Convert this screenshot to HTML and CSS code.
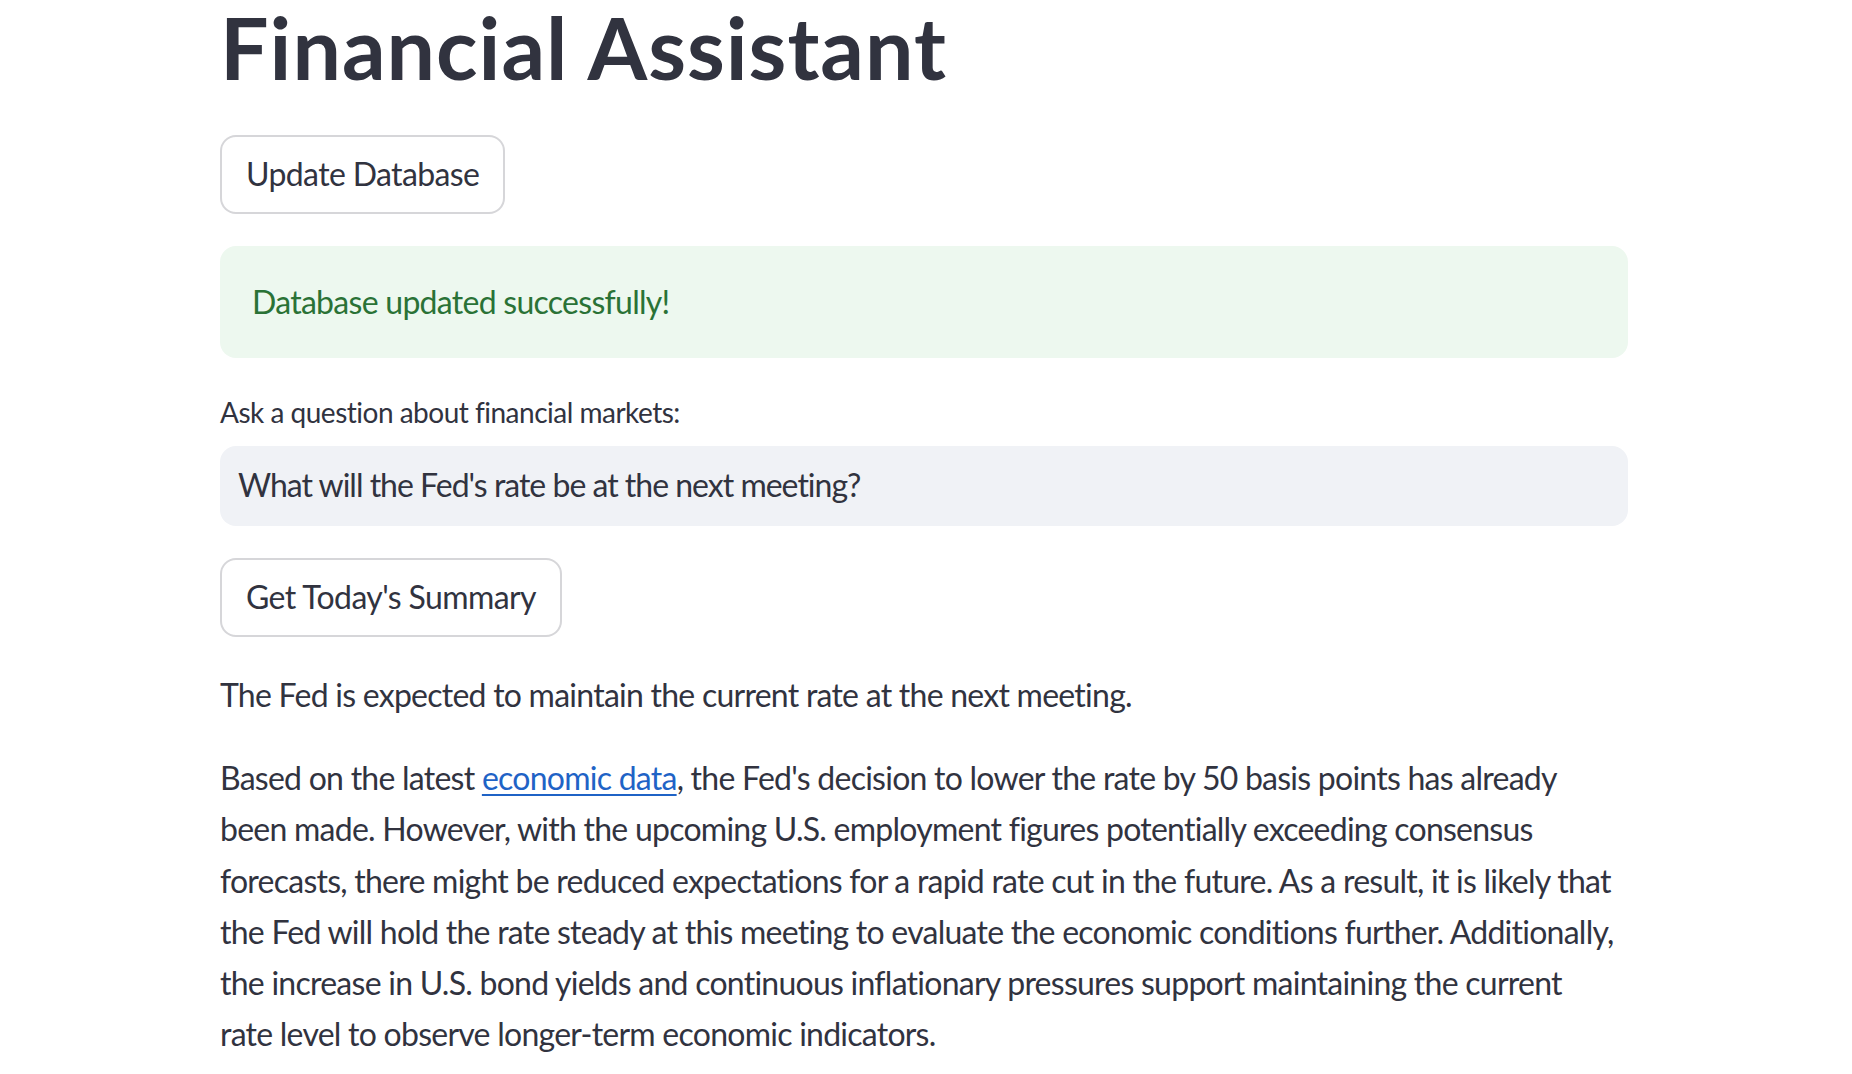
FILE: index.html
```html
<!DOCTYPE html>
<html lang="en">
<head>
<meta charset="utf-8">
<title>Financial Assistant</title>
<link rel="stylesheet" href="styles.css">
</head>
<body>
<main class="app">
  <div class="block">
    <h1 class="title">Financial Assistant</h1>
    <div class="btn-row"><button class="btn">Update Database</button></div>
    <div class="alert-success"><p>Database updated successfully!</p></div>
    <div class="field">
      <label class="field-label" for="q">Ask a question about financial markets:</label>
      <input class="field-input" id="q" type="text" value="What will the Fed's rate be at the next meeting?">
    </div>
    <div class="btn-row"><button class="btn">Get Today's Summary</button></div>
    <div class="markdown">
      <p>The Fed is expected to maintain the current rate at the next meeting.</p>
      <p>Based on the latest <a href="#">economic data</a>, the Fed's decision to lower the rate by 50 basis points has already been made. However, with the upcoming U.S. employment figures potentially exceeding consensus forecasts, there might be reduced expectations for a rapid rate cut in the future. As a result, it is likely that the Fed will hold the rate steady at this meeting to evaluate the economic conditions further. Additionally, the increase in U.S. bond yields and continuous inflationary pressures support maintaining the current rate level to observe longer-term economic indicators.</p>
    </div>
  </div>
</main>
</body>
</html>
```

FILE: styles.css
```css
html, body {
  margin: 0;
  padding: 0;
  background: #ffffff;
}

body {
  font-family: "Lato", "Noto Sans", sans-serif;
  color: #31333f;
  overflow: hidden;
}

.app {
  width: 1408px;
  margin-left: 220px;
}

.block {
  display: flex;
  flex-direction: column;
  gap: 32px;
}

.title {
  margin: 0;
  padding-top: 3px;
  padding-bottom: 12px;
  font-size: 86px;
  line-height: 88px;
  font-weight: 700;
  letter-spacing: 1px;
  color: #31333f;
}

.btn-row {
  display: flex;
}

.btn {
  height: 79px;
  padding: 0 24px 3px;
  border: 2px solid rgba(49, 51, 63, 0.2);
  border-radius: 16px;
  background: #ffffff;
  color: #31333f;
  font-family: inherit;
  font-size: 32px;
  letter-spacing: -0.62px;
}

.alert-success {
  background: #edf8ef;
  border-radius: 16px;
  padding: 30px 32px;
}

.alert-success p {
  margin: 0;
  font-size: 32px;
  line-height: 52px;
  color: #2a7236;
  letter-spacing: -0.72px;
}

.field {
  display: flex;
  flex-direction: column;
}

.field-label {
  font-size: 28px;
  line-height: 44px;
  margin-bottom: 12px;
  letter-spacing: -0.5px;
}

.field-input {
  height: 80px;
  box-sizing: border-box;
  border: none;
  border-radius: 16px;
  background: #f0f2f6;
  padding: 0 18px 3px;
  font-family: inherit;
  font-size: 32px;
  color: #31333f;
  letter-spacing: -1px;
  outline: none;
}

.markdown p {
  max-width: 1401px;
  margin: 0 0 32px 0;
  font-size: 32px;
  line-height: 51.2px;
  letter-spacing: -0.75px;
}

.markdown a {
  color: #1f63c6;
  text-decoration: underline;
  text-decoration-thickness: 2px;
  text-underline-offset: 4px;
}
```
